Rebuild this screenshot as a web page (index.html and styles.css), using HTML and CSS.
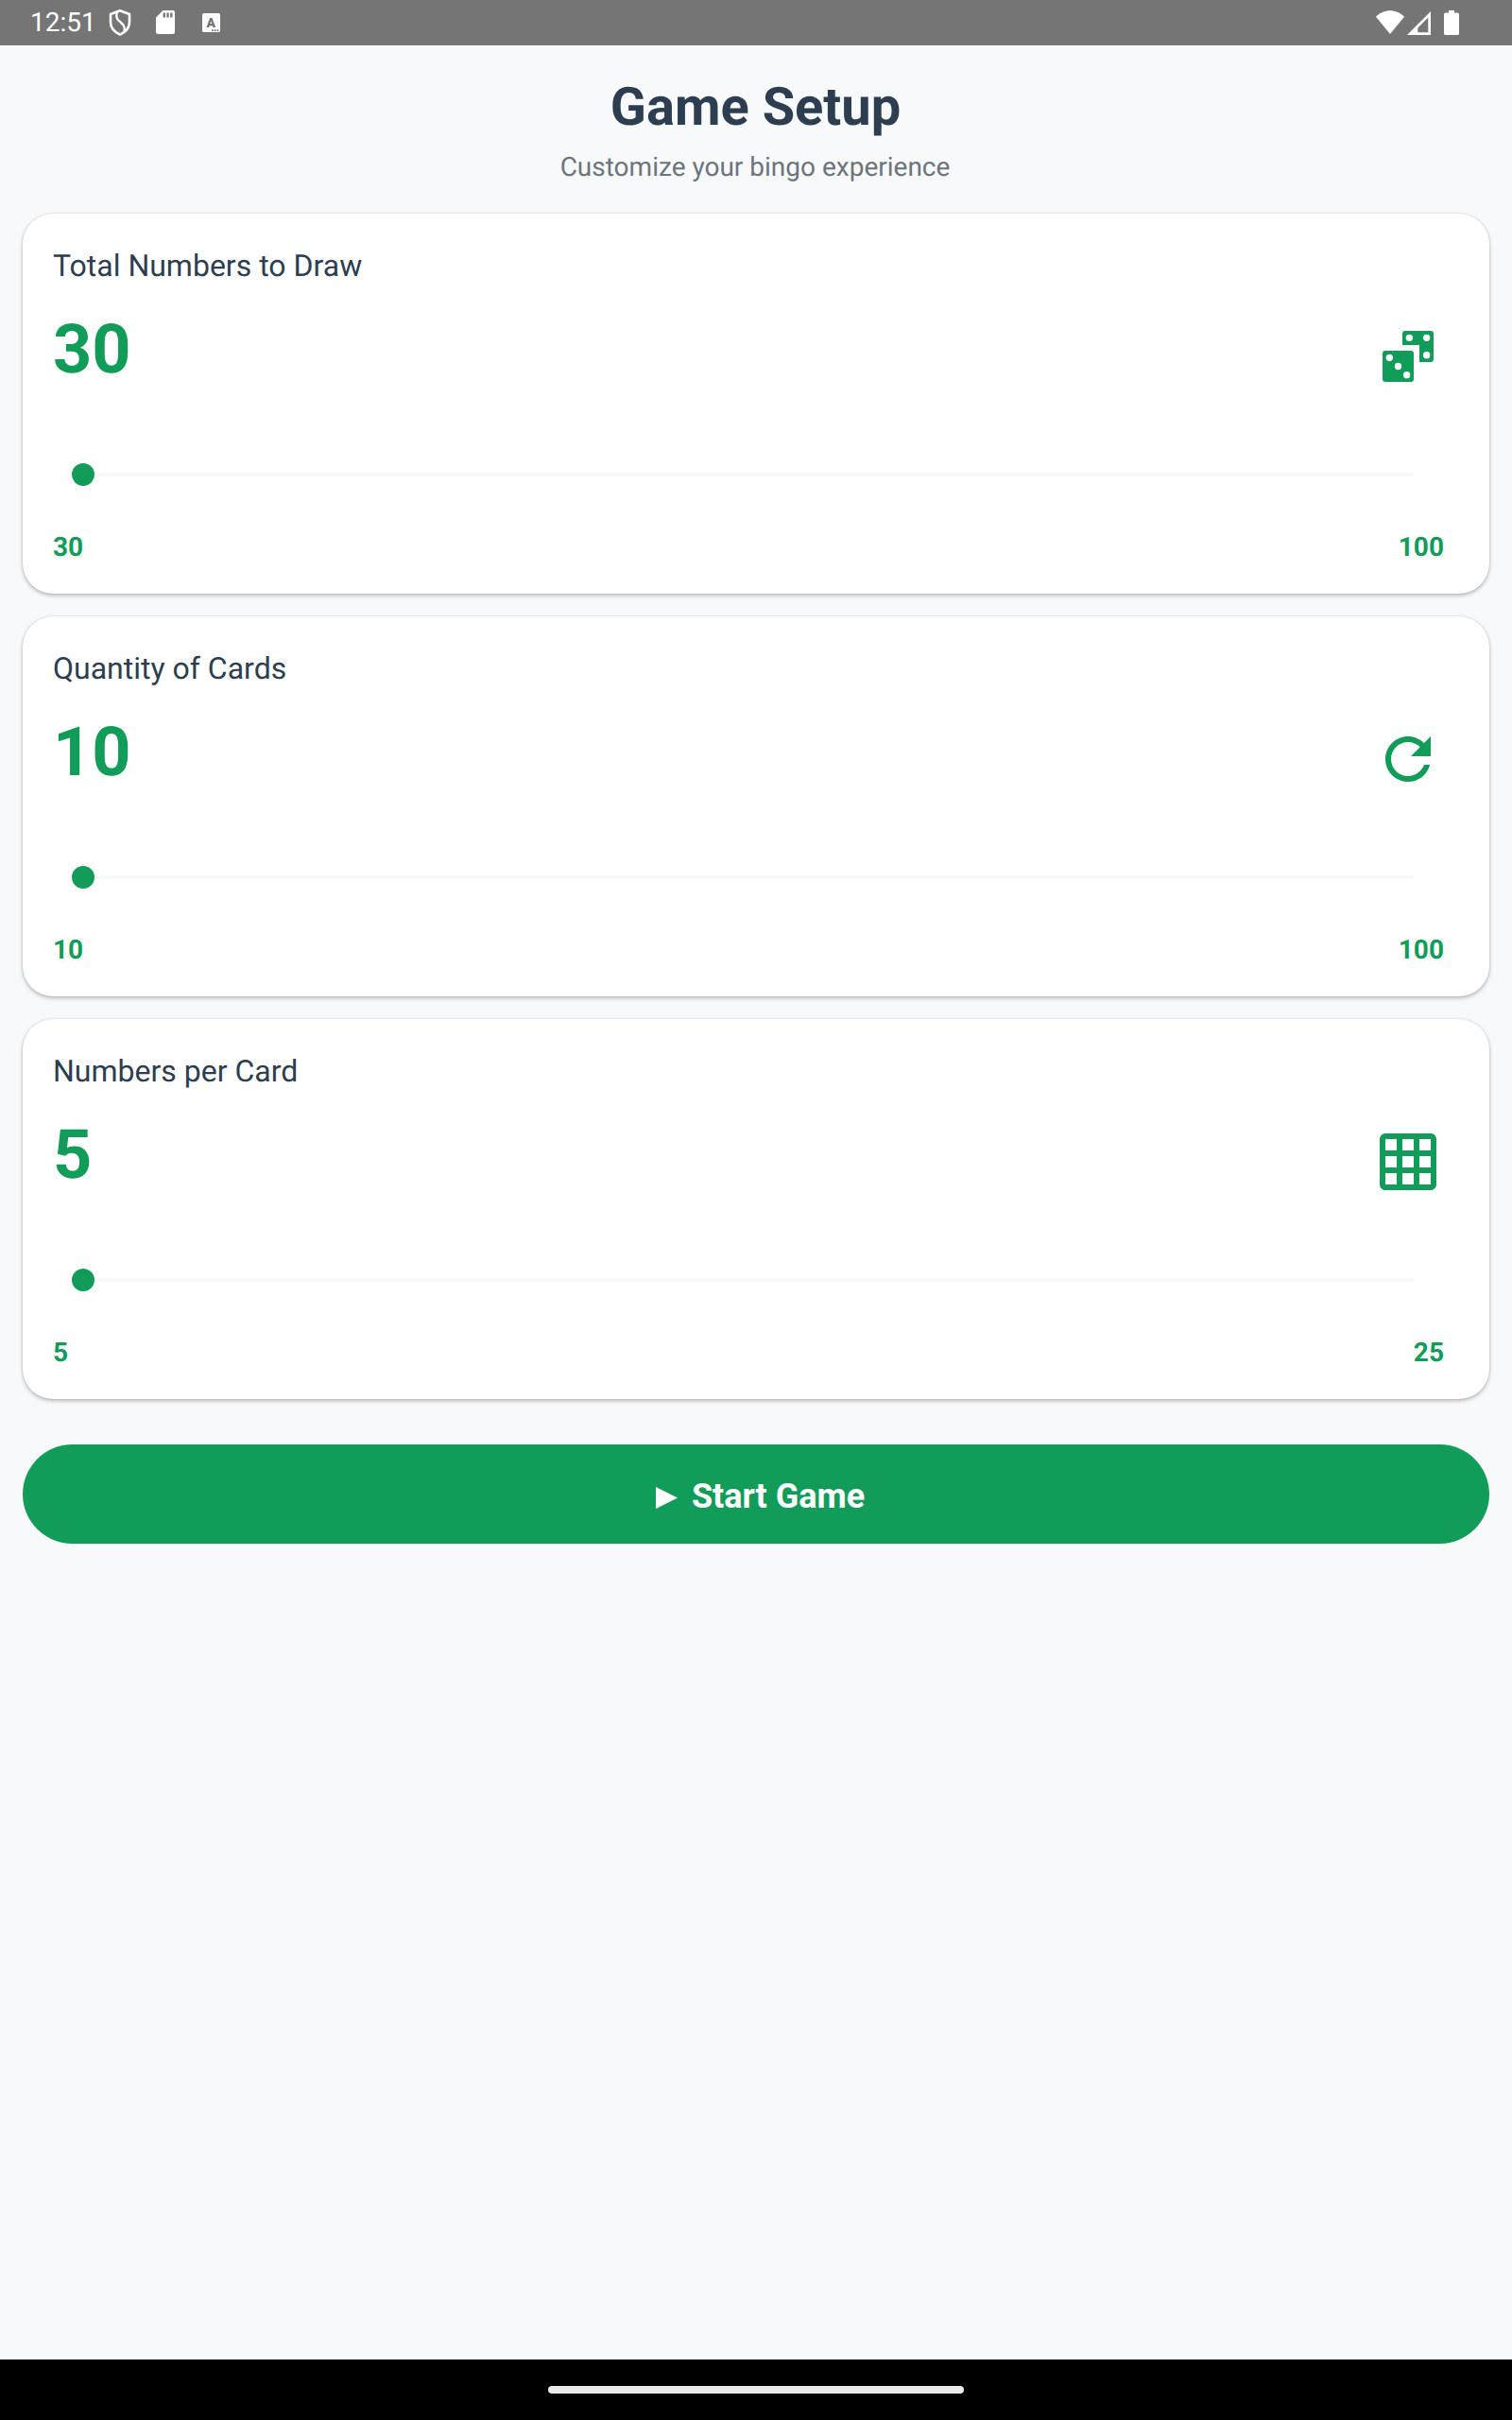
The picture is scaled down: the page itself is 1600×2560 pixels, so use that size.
FILE: index.html
```html
<!DOCTYPE html>
<html lang="en">
<head>
<meta charset="utf-8">
<title>Game Setup</title>
<link rel="stylesheet" href="styles.css">
</head>
<body>
<div class="screen">
  <header class="status">
    <div class="status-left">
      <span class="clock">12:51</span>
      <svg class="shield" width="24" height="30" viewBox="0 0 24 30" fill="none" stroke="#fff" stroke-width="2.6" stroke-linejoin="round"><path d="M12 2.3 22 6v8.500c0 6.500-4.500 10.500-10 13.200C6.500 25 2 21 2 14.500V6z"/><path d="M9 3.500C7 10 9.500 12 12.500 14.500S17.500 19 16.500 24" stroke-width="2.300"/></svg>
      <svg class="sd" width="20" height="25" viewBox="0 0 20 25"><path fill="#fff" d="M7.500 0H18a2 2 0 0 1 2 2v21a2 2 0 0 1-2 2H2a2 2 0 0 1-2-2V7.500z"/><path fill="#757575" d="M7.600 2.500h2.300v5H7.600zM11.400 2.500h2.300v5h-2.300zM15.200 2.500h2.300v5h-2.300z"/></svg>
      <svg class="keyboard" width="19" height="20" viewBox="0 0 19 20"><rect width="19" height="20" rx="1.500" fill="#fff"/><text class="key-letter" x="9.300" y="15" text-anchor="middle">A</text><path fill="#757575" d="M10 17.300h1.700v1.700H10zM12.800 17.300h1.700v1.700h-1.700zM15.600 17.300h1.700v1.700h-1.700z"/></svg>
    </div>
    <div class="status-right">
      <svg width="30" height="25" viewBox="0 0 30 25"><path fill="#fff" d="M15 25 0 6.800C4 2.500 9.500.3 15 .3S26 2.500 30 6.800z"/></svg>
      <svg class="signal" width="25" height="25" viewBox="0 0 25 25"><path fill="#fff" fill-rule="evenodd" d="M25 0v25H0zM22.300 6.500 11.300 17.500v4.800h11z"/></svg>
      <svg class="battery" width="16" height="26" viewBox="0 0 16 26"><path fill="#fff" d="M5 0h6v2.500h3.500A1.500 1.500 0 0 1 16 4v20.500a1.500 1.500 0 0 1-1.500 1.500h-13A1.500 1.500 0 0 1 0 24.500V4a1.500 1.500 0 0 1 1.500-1.500H5z"/></svg>
    </div>
  </header>
  <main class="content">
    <h1 class="title"><span>Game Setup</span></h1>
    <p class="subtitle"><span>Customize your bingo experience</span></p>
    <section class="card">
      <h2 class="label"><span>Total Numbers to Draw</span></h2>
      <div class="value-row">
        <span class="value">30</span>
        <svg class="icon" viewBox="0 0 24 24"><path d="M11 3h9a1 1 0 0 1 1 1v9a1 1 0 0 1-1 1h-4V8h-6V4a1 1 0 0 1 1-1z"/><rect x="3" y="10" width="11" height="11" rx="1"/><g fill="#fff"><circle cx="12.450" cy="5.450" r="1.220"/><circle cx="18.550" cy="5.450" r="1.220"/><circle cx="18.550" cy="11.550" r="1.220"/><circle cx="5.450" cy="12.450" r="1.220"/><circle cx="8.500" cy="15.500" r="1.220"/><circle cx="11.550" cy="18.550" r="1.220"/></g></svg>
      </div>
      <div class="slider"><div class="thumb"></div></div>
      <div class="range"><span>30</span><span>100</span></div>
    </section>
    <section class="card">
      <h2 class="label"><span>Quantity of Cards</span></h2>
      <div class="value-row">
        <span class="value">10</span>
        <svg class="icon" viewBox="0 0 24 24"><path d="M17.650 6.350C16.200 4.900 14.210 4 12 4c-4.420 0-7.990 3.580-7.990 8s3.570 8 7.990 8c3.730 0 6.840-2.550 7.730-6h-2.080c-.820 2.330-3.040 4-5.650 4-3.310 0-6-2.690-6-6s2.690-6 6-6c1.660 0 3.140.690 4.220 1.780L13 11h7V4l-2.350 2.350z"/></svg>
      </div>
      <div class="slider"><div class="thumb"></div></div>
      <div class="range"><span>10</span><span>100</span></div>
    </section>
    <section class="card">
      <h2 class="label"><span>Numbers per Card</span></h2>
      <div class="value-row">
        <span class="value">5</span>
        <svg class="icon" viewBox="0 0 24 24"><path d="M20 2H4c-1.100 0-2 .9-2 2v16c0 1.100.9 2 2 2h16c1.100 0 2-.9 2-2V4c0-1.100-.9-2-2-2zM8 20H4v-4h4v4zm0-6H4v-4h4v4zm0-6H4V4h4v4zm6 12h-4v-4h4v4zm0-6h-4v-4h4v4zm0-6h-4V4h4v4zm6 12h-4v-4h4v4zm0-6h-4v-4h4v4zm0-6h-4V4h4v4z"/></svg>
      </div>
      <div class="slider"><div class="thumb"></div></div>
      <div class="range"><span>5</span><span>25</span></div>
    </section>
    <button class="start" type="button">
      <svg class="play" width="23" height="23" viewBox="0 0 23 23"><path fill="#fff" d="M0 0v23l23-11.500z"/></svg>
      <span>Start Game</span>
    </button>
  </main>
  <footer class="nav"><div class="pill"></div></footer>
</div>
</body>
</html>
```

FILE: styles.css
```css
* { box-sizing: border-box; }
body { margin: 0; background: #f8f9fb; font-family: Roboto, sans-serif; text-rendering: geometricPrecision; }
svg { display: block; flex: none; }
h1, h2, p { margin: 0; font-weight: 400; }
.screen { width: 1600px; height: 2560px; display: flex; flex-direction: column; }

.status { height: 48px; flex: none; background: #757575; color: #fff; display: flex; justify-content: space-between; padding: 0 56px 0 32px; }
.status-left, .status-right { display: flex; align-items: flex-start; }
.clock { width: 83px; font-size: 28px; line-height: 32px; padding-top: 8px; }
.shield { margin-top: 9px; }
.sd { margin: 11px 0 0 26px; }
.keyboard { margin: 14px 0 0 29px; }
.key-letter { font-size: 14px; font-weight: 900; fill: #757575; }
.status-right { padding-top: 11px; }
.signal { margin: 1px 0 0 3px; }
.battery { margin-left: 14px; }

.content { flex: 1; padding: 32px 24px 0; display: flex; flex-direction: column; }
.title { font-size: 56px; line-height: 66px; font-weight: 700; color: #2c3e50; text-align: center; padding-right: 1px; }
.subtitle { font-size: 28px; line-height: 32px; margin: 15px 0 33px; padding-right: 2px; color: #6c757d; text-align: center; }

.card { height: 402px; margin-bottom: 24px; padding: 36px 48px 0 32px; border-radius: 32px; background: #fff; box-shadow: 0 2px 4px rgba(0, 0, 0, .26), 0 0 2px rgba(0, 0, 0, .14); }
.label { font-size: 32px; line-height: 38px; color: #2c3e50; }
.value-row { display: flex; justify-content: space-between; align-items: flex-start; margin-top: 28px; height: 84px; }
.value { font-size: 72px; line-height: 84px; font-weight: 700; color: #119d59; }
.icon { width: 72px; height: 72px; margin: 13px 2px 0 0; fill: #119d59; }
.slider { height: 4px; margin: 88px 32px 0; background: #f8f9fa; display: flex; align-items: center; }
.thumb { width: 24px; height: 24px; margin-left: -12px; border-radius: 50%; background: #119d59; }
.range { display: flex; justify-content: space-between; margin-top: 59px; font-size: 28px; line-height: 32px; font-weight: 700; color: #119d59; }

.start { height: 105px; margin-top: 24px; padding: 5px 0 0 9px; border: 0; border-radius: 53px; background: #119d59; color: #fff; font: 700 36px/42px Roboto, sans-serif; display: flex; align-items: center; justify-content: center; gap: 15px; }
.play { margin-top: 2px; }

.nav { height: 64px; flex: none; background: #000; display: flex; justify-content: center; align-items: center; }
.pill { width: 440px; height: 8px; border-radius: 4px; background: #ebebeb; }
```
